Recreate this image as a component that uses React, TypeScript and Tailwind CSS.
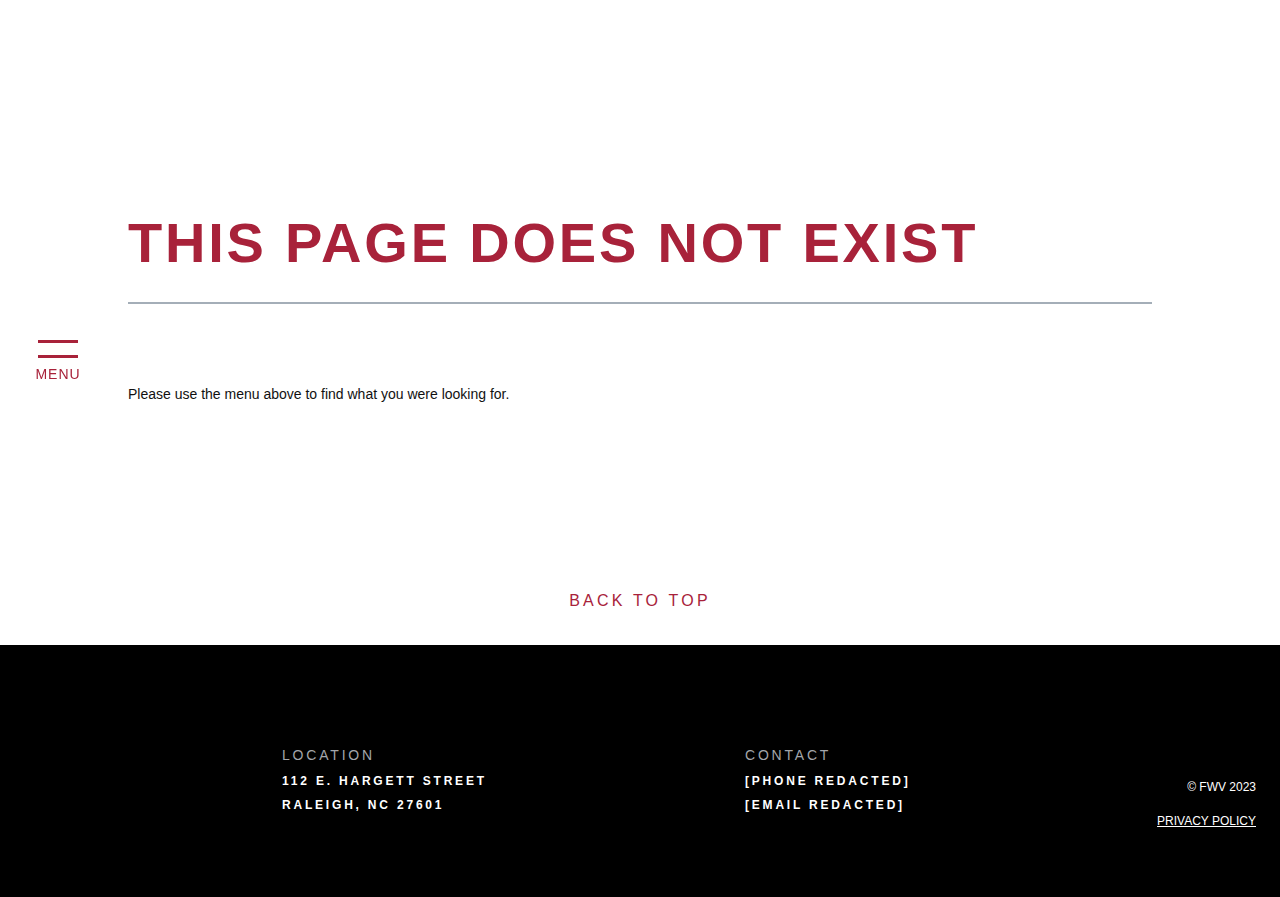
import React from 'react';

const RED = 'text-[#a8223a]';

const MenuButton: React.FC = () => (
    <button className="fixed left-[36px] top-[340px] flex flex-col items-center w-[44px] cursor-pointer">
        <span className="block w-[40px] h-[3px] bg-[#a8223a]"></span>
        <span className="block w-[40px] h-[3px] bg-[#a8223a] mt-[12px]"></span>
        <span className={`mt-[8px] text-[14px] leading-[16px] tracking-[0.07em] ${RED}`}>MENU</span>
    </button>
);

const App: React.FC = () => {
    return (
        <div className="min-h-[897px] bg-white font-['Liberation_Sans',Arial,sans-serif] flex flex-col">
            <MenuButton />

            <main className="w-[1024px] mx-auto pt-[215px]">
                <h1 className={`text-[56px] leading-none font-bold tracking-[0.05em] ${RED}`}>
                    THIS PAGE DOES NOT EXIST
                </h1>
                <hr className="mt-[31px] border-0 h-[2px] bg-[#a4aeb8]" />
                <p className="mt-[80px] text-[14px] leading-[20px] text-[#111]">
                    Please use the menu above to find what you were looking for.
                </p>
            </main>

            <div className="mt-[185px] mb-[32px] flex justify-center">
                <a href="#" className={`text-[16px] leading-[24px] tracking-[0.2em] ${RED}`}>BACK TO TOP</a>
            </div>

            <footer className="bg-black h-[252px] pt-[100px] px-6 flex">
                <div className="ml-[258px] w-[463px]">
                    <h4 className="text-[14px] leading-[20px] tracking-[0.2em] text-[#a3a6ab]">LOCATION</h4>
                    <div className="mt-[4px] text-[12px] leading-[24px] font-bold tracking-[2.8px] text-white">
                        <div>112 E. HARGETT STREET</div>
                        <div>RALEIGH, NC 27601</div>
                    </div>
                </div>
                <div className="w-[300px]">
                    <h4 className="text-[14px] leading-[20px] tracking-[0.2em] text-[#a3a6ab]">CONTACT</h4>
                    <div className="mt-[4px] text-[12px] leading-[24px] font-bold tracking-[2.8px] text-white">
                        <div>[PHONE REDACTED]</div>
                        <div>[EMAIL REDACTED]</div>
                    </div>
                </div>
                <div className="flex-1 text-right text-white text-[12px] leading-[16px] pt-[34px]">
                    <div>© FWV 2023</div>
                    <a href="#" className="inline-block mt-[18px] underline">PRIVACY POLICY</a>
                </div>
            </footer>
        </div>
    );
};

export default App;
